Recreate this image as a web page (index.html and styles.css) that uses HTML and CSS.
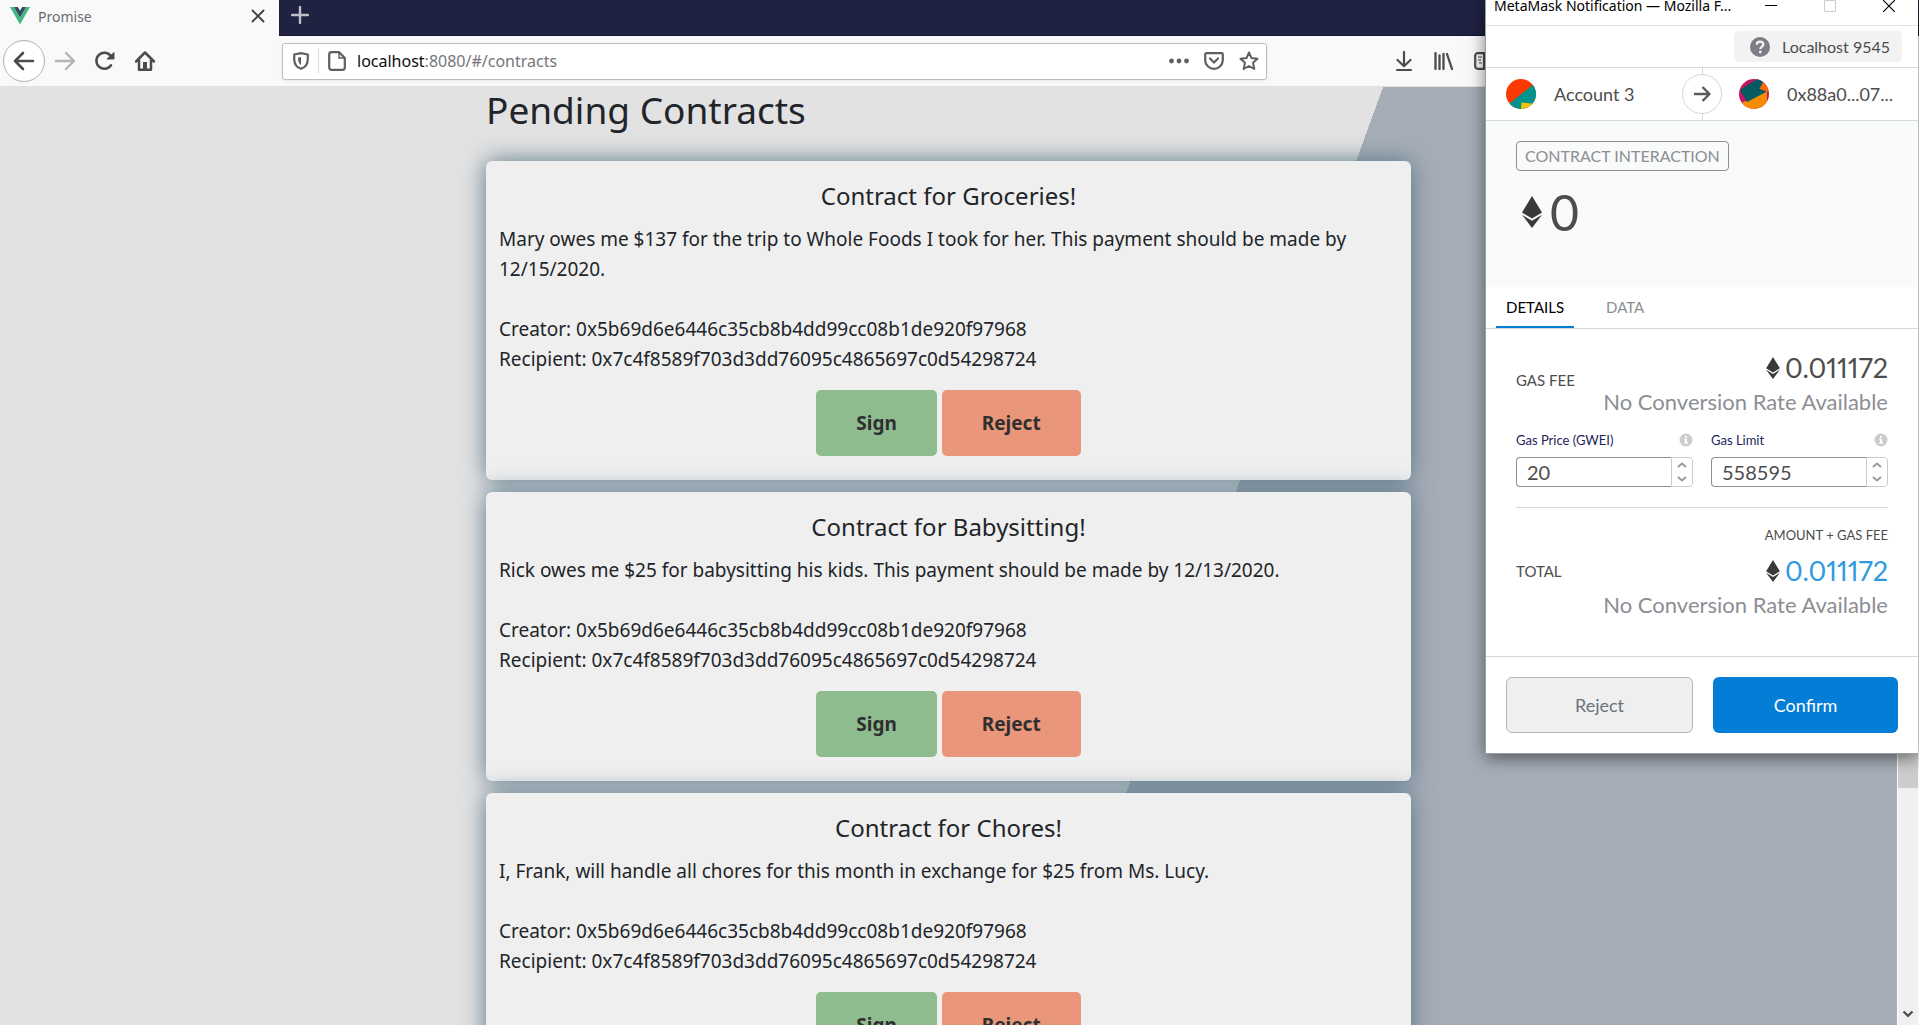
FILE: index.html
```html
<!DOCTYPE html>
<html lang="en">
<head>
<meta charset="utf-8">
<title>Promise</title>
<link rel="stylesheet" href="styles.css">
</head>
<body>
<svg class="defs" width="0" height="0" aria-hidden="true">
  <symbol id="eth" viewBox="0 0 20 32">
    <path d="M10 0 20 16.500 10 22.500 0 16.500z" fill="#393939"/>
    <path d="M0 18.700 10 24.800 20 18.700 10 32z" fill="#393939"/>
  </symbol>
  <symbol id="info" viewBox="0 0 14 14">
    <circle cx="7" cy="7" r="6.500" fill="#ccc"/>
    <path d="M6 3h2v1.800H6zM5.300 5.800H8V9.300h.8v1.400H5.200V9.300H6V7.200h-.7z" fill="#fff"/>
  </symbol>
  <symbol id="up" viewBox="0 0 10 6"><path d="M1 5 5 1.500 9 5" fill="none" stroke="#9b9b9b" stroke-width="2"/></symbol>
  <symbol id="down" viewBox="0 0 10 6"><path d="M1 1 5 4.500 9 1" fill="none" stroke="#9b9b9b" stroke-width="2"/></symbol>
</svg>

<header class="browser">
  <div class="tabstrip">
    <div class="tab">
      <svg width="20" height="18" viewBox="0 0 20 18"><path d="M0 0h4l6 10.400L16 0h4L10 17.500z" fill="#41b883"/><path d="M4 0h3.800L10 3.800 12.200 0H16l-6 10.400z" fill="#35495e"/></svg>
      <span class="tab-title">Promise</span>
      <button class="icon-btn tab-close" aria-label="Close tab"><svg width="14" height="14" viewBox="0 0 14 14"><path d="M1.500 1.500l11 11M12.500 1.500l-11 11" stroke="#3c3c3d" stroke-width="1.800" stroke-linecap="round"/></svg></button>
    </div>
    <button class="icon-btn new-tab" aria-label="New tab"><svg width="18" height="18" viewBox="0 0 18 18"><path d="M9 1v16M1 9h16" stroke="#bfc0ca" stroke-width="2.400" stroke-linecap="round"/></svg></button>
  </div>
  <div class="toolbar">
    <nav class="nav">
      <button class="icon-btn back" aria-label="Back"><svg width="22" height="20" viewBox="0 0 22 20"><path d="M20 10H2.500M10 2 2 10l8 8" fill="none" stroke="#4c4c4d" stroke-width="2.600" stroke-linecap="round" stroke-linejoin="round"/></svg></button>
      <button class="icon-btn forward" aria-label="Forward"><svg width="22" height="20" viewBox="0 0 22 20"><path d="M2 10h17.500M12 2l8 8-8 8" fill="none" stroke="#b4b4b5" stroke-width="2.400" stroke-linecap="round" stroke-linejoin="round"/></svg></button>
      <button class="icon-btn" aria-label="Reload"><svg width="20" height="20" viewBox="0 0 20 20"><path d="M16 14.300A8 8 0 1 1 16 5.200" fill="none" stroke="#4c4c4d" stroke-width="2.500" stroke-linecap="round"/><path d="M19 1.500V8h-7z" fill="#4c4c4d" stroke="#4c4c4d" stroke-linejoin="round"/></svg></button>
      <button class="icon-btn" aria-label="Home"><svg width="20" height="20" viewBox="0 0 20 20"><path d="M1 10.500 10 1.500l9 9M4 9v9.700h12V9" fill="none" stroke="#4c4c4d" stroke-width="2.500" stroke-linecap="round" stroke-linejoin="round"/><path d="M8 19v-8h4v8z" fill="#4c4c4d"/></svg></button>
    </nav>
    <div class="urlbar">
      <svg width="16" height="18" viewBox="0 0 16 18"><path d="M8 1.200 14.800 2.500V7c0 5-3 8.500-6.800 9.800C4.200 15.500 1.200 12 1.200 7V2.500z" fill="none" stroke="#5f5f60" stroke-width="2.200" stroke-linejoin="round"/><path d="M8 5v8c-2-1.200-3-3.500-3-7.500z" fill="#5f5f60"/></svg>
      <span class="url-rule"></span>
      <svg width="18" height="20" viewBox="0 0 18 20"><path d="M3.500 1.200H11l5.800 5.800v9.500a2.300 2.300 0 0 1-2.300 2.300h-11a2.300 2.300 0 0 1-2.300-2.300v-13a2.300 2.300 0 0 1 2.300-2.300z" fill="none" stroke="#5f5f60" stroke-width="2.200"/><path d="M11 1.500V7h5.500" fill="none" stroke="#5f5f60" stroke-width="1.400"/></svg>
      <span class="url"><b>localhost</b>:8080/#/contracts</span>
      <svg width="20" height="6" viewBox="0 0 20 6"><circle cx="2.500" cy="3" r="2.400" fill="#5f5f60"/><circle cx="10" cy="3" r="2.400" fill="#5f5f60"/><circle cx="17.500" cy="3" r="2.400" fill="#5f5f60"/></svg>
      <svg width="20" height="18" viewBox="0 0 20 18"><path d="M2.500 1.200h15a1.300 1.300 0 0 1 1.300 1.300V8a8.800 8.800 0 0 1-17.600 0V2.500a1.300 1.300 0 0 1 1.300-1.300z" fill="none" stroke="#5f5f60" stroke-width="2.200"/><path d="M6 6.500l4 4 4-4" fill="none" stroke="#5f5f60" stroke-width="2.200" stroke-linecap="round" stroke-linejoin="round"/></svg>
      <svg width="20" height="20" viewBox="0 0 20 20"><path d="M10 1.500l2.500 5.600 6 .6-4.500 4.100 1.300 6.200L10 15l-5.300 3L6 11.800 1.500 7.700l6-.6z" fill="none" stroke="#5f5f60" stroke-width="2" stroke-linejoin="round"/></svg>
    </div>
    <div class="tools">
      <button class="icon-btn" aria-label="Downloads"><svg width="16" height="20" viewBox="0 0 16 20"><path d="M8 1v14M1.500 9 8 15.200 14.500 9" fill="none" stroke="#4c4c4d" stroke-width="2.200" stroke-linecap="round" stroke-linejoin="round"/><path d="M1 19h14" stroke="#4c4c4d" stroke-width="2" stroke-linecap="round"/></svg></button>
      <button class="icon-btn" aria-label="Library"><svg width="20" height="18" viewBox="0 0 20 18"><path d="M1.500 1v16M5.500 3.500V17M9.500 2v15M13 2l5 15" stroke="#4c4c4d" stroke-width="2.300" stroke-linecap="round"/></svg></button>
      <button class="icon-btn" aria-label="Sidebars"><svg width="20" height="18" viewBox="0 0 20 18"><rect x="1.200" y="1.200" width="17.600" height="15.600" rx="2.500" fill="none" stroke="#4c4c4d" stroke-width="2.200"/><path d="M10 1v16" stroke="#4c4c4d" stroke-width="2"/><path d="M4 5h4M4 8h3M5 11h3" stroke="#4c4c4d" stroke-width="1.200"/></svg></button>
    </div>
  </div>
</header>

<div class="viewport">
  <main class="page">
    <div class="contracts">
      <h1>Pending Contracts</h1>
      <article class="card">
        <h2>Contract for Groceries!</h2>
        <p>Mary owes me $137 for the trip to Whole Foods I took for her. This payment should be made by 12/15/2020.</p>
        <p class="parties">Creator: 0x5b69d6e6446c35cb8b4dd99cc08b1de920f97968<br>Recipient: 0x7c4f8589f703d3dd76095c4865697c0d54298724</p>
        <div class="actions"><button class="sign">Sign</button><button class="reject">Reject</button></div>
      </article>
      <article class="card">
        <h2>Contract for Babysitting!</h2>
        <p>Rick owes me $25 for babysitting his kids. This payment should be made by 12/13/2020.</p>
        <p class="parties">Creator: 0x5b69d6e6446c35cb8b4dd99cc08b1de920f97968<br>Recipient: 0x7c4f8589f703d3dd76095c4865697c0d54298724</p>
        <div class="actions"><button class="sign">Sign</button><button class="reject">Reject</button></div>
      </article>
      <article class="card">
        <h2>Contract for Chores!</h2>
        <p>I, Frank, will handle all chores for this month in exchange for $25 from Ms. Lucy.</p>
        <p class="parties">Creator: 0x5b69d6e6446c35cb8b4dd99cc08b1de920f97968<br>Recipient: 0x7c4f8589f703d3dd76095c4865697c0d54298724</p>
        <div class="actions"><button class="sign">Sign</button><button class="reject">Reject</button></div>
      </article>
    </div>
  </main>
  <div class="scrollbar">
    <div class="thumb"></div>
    <svg width="12" height="8" viewBox="0 0 12 8"><path d="M1.500 1.500 6 5.800l4.500-4.300" fill="none" stroke="#505050" stroke-width="2.400"/></svg>
  </div>
</div>

<section class="popup" aria-label="MetaMask Notification">
  <header class="popup-title">
    <span class="popup-name">MetaMask Notification — Mozilla F...</span>
    <button class="icon-btn" aria-label="Minimize"><svg width="12" height="12" viewBox="0 0 12 12"><path d="M0 5.500h12" stroke="#000"/></svg></button>
    <button class="icon-btn" aria-label="Maximize"><svg width="12" height="12" viewBox="0 0 12 12"><path d="M.5.500h11v11H.5z" fill="none" stroke="#ccc"/></svg></button>
    <button class="icon-btn" aria-label="Close"><svg width="12" height="12" viewBox="0 0 12 12"><path d="M0 0l12 12M12 0 0 12" stroke="#000" stroke-width="1.200"/></svg></button>
  </header>
  <div class="network-row">
    <div class="network">
      <svg width="20" height="20" viewBox="0 0 20 20"><circle cx="10" cy="10" r="10" fill="#7b7f84"/><path d="M6.800 7.800C6.800 5.800 8.100 4.700 10 4.700s3.300 1.100 3.300 2.800c0 2.200-2.900 2.200-2.900 4.600" fill="none" stroke="#f2f3f4" stroke-width="2.300"/><circle cx="10.300" cy="15" r="1.400" fill="#f2f3f4"/></svg>
      <span>Localhost 9545</span>
    </div>
  </div>
  <div class="parties-row">
    <div class="party">
      <svg width="30" height="30" viewBox="0 0 30 30"><clipPath id="ca"><circle cx="15" cy="15" r="15"/></clipPath><g clip-path="url(#ca)"><path d="M0 0h30v30H0z" fill="#fb3a02"/><path d="M28 5 4 24l-1 6h27V5z" fill="#03938e"/><path d="M15.500 23.500 30 25v5H15z" fill="#f5c300"/></g></svg>
      <span>Account 3</span>
    </div>
    <div class="arrow">
      <svg width="18" height="18" viewBox="0 0 18 18"><path d="M1 9h15M9.500 2 16.500 9l-7 7" fill="none" stroke="#5b5b5b" stroke-width="2.400" stroke-linejoin="round"/></svg>
    </div>
    <div class="party recipient">
      <svg width="30" height="30" viewBox="0 0 30 30"><clipPath id="cb"><circle cx="15" cy="15" r="15"/></clipPath><g clip-path="url(#cb)"><path d="M0 0h30v30H0z" fill="#c91561"/><path d="M0 25 28 12v18H0z" fill="#f58c03"/><path d="M1 11 13 3 22-2l4 7-3 4 4 4L8 23z" fill="#045b62"/><path d="M24 3 20.500 10 30 13V6z" fill="#fb6a02"/></g></svg>
      <span>0x88a0...07...</span>
    </div>
  </div>
  <div class="summary">
    <span class="action-tag">CONTRACT INTERACTION</span>
    <div class="amount"><svg width="20" height="32"><use href="#eth"/></svg><span>0</span></div>
  </div>
  <nav class="popup-tabs">
    <button class="popup-tab active">DETAILS</button>
    <button class="popup-tab">DATA</button>
  </nav>
  <div class="details">
    <div class="fee">
      <span class="fee-label">GAS FEE</span>
      <div class="fee-values">
        <div class="eth-value"><svg width="14" height="22"><use href="#eth"/></svg><span>0.011172</span></div>
        <div class="rate">No Conversion Rate Available</div>
      </div>
    </div>
    <div class="gas-fields">
      <div class="field">
        <label for="price">Gas Price (GWEI)</label><svg width="14" height="14"><use href="#info"/></svg>
        <div class="number"><input id="price" type="number" value="20"><div class="steps"><button aria-label="Raise gas price"><svg width="10" height="6"><use href="#up"/></svg></button><button aria-label="Lower gas price"><svg width="10" height="6"><use href="#down"/></svg></button></div></div>
      </div>
      <div class="field">
        <label for="limit">Gas Limit</label><svg width="14" height="14"><use href="#info"/></svg>
        <div class="number"><input id="limit" type="number" value="558595"><div class="steps"><button aria-label="Raise gas limit"><svg width="10" height="6"><use href="#up"/></svg></button><button aria-label="Lower gas limit"><svg width="10" height="6"><use href="#down"/></svg></button></div></div>
      </div>
    </div>
    <div class="total-note">AMOUNT + GAS FEE</div>
    <div class="fee total">
      <span class="fee-label">TOTAL</span>
      <div class="fee-values">
        <div class="eth-value"><svg width="14" height="22"><use href="#eth"/></svg><span>0.011172</span></div>
        <div class="rate">No Conversion Rate Available</div>
      </div>
    </div>
  </div>
  <footer class="popup-actions">
    <button class="popup-btn secondary">Reject</button>
    <button class="popup-btn primary">Confirm</button>
  </footer>
</section>
</body>
</html>
```
FILE: styles.css
```css
* { box-sizing: border-box; }

body {
  margin: 0;
  height: 100vh;
  display: flex;
  flex-direction: column;
  overflow: hidden;
  position: relative;
  background: #f9f9fa;
  color: #212529;
  font-family: "Noto Sans", "Open Sans", sans-serif;
}

.defs { position: absolute; }
svg { display: block; flex: none; }
button { font-family: inherit; cursor: pointer; }

.icon-btn {
  display: flex;
  align-items: center;
  justify-content: center;
  padding: 0;
  border: 0;
  background: none;
}

/* Browser chrome */
.tabstrip {
  display: flex;
  height: 36px;
  background: #1f2241;
  border-bottom: 1px solid #11132b;
}
.tab {
  display: flex;
  align-items: center;
  gap: 8px;
  width: 279px;
  height: 36px;
  padding: 0 14px 4px 10px;
  background: #f9f9fa;
}
.tab-title { flex: 1; font-size: 14px; color: #6b6b70; }
.new-tab { width: 42px; height: 30px; }

.toolbar {
  display: grid;
  grid-template-columns: 282px 985fr 652fr;
  align-items: center;
  height: 51px;
  border-bottom: 1px solid #e0e0e1;
}
.nav { display: flex; align-items: center; padding-left: 3px; }
.nav .icon-btn { width: 40px; height: 42px; }
.nav .back { width: 42px; border: 1px solid #b1b1b3; border-radius: 50%; background: #fff; }
.urlbar {
  display: flex;
  align-items: center;
  gap: 15px;
  height: 37px;
  padding: 0 7px 0 10px;
  border: 1px solid #bdbdbe;
  border-radius: 3px;
  background: #fff;
  box-shadow: 0 1px 4px rgba(0, 0, 0, .06);
}
.url-rule { width: 1px; height: 26px; background: #ddd; margin: 0 -6px; }
.url { flex: 1; font-size: 16px; color: #75757a; margin-left: -4px; }
.url b { font-weight: 400; color: #0c0c0d; }
.tools { display: flex; gap: 4px; padding-left: 119px; }
.tools .icon-btn { width: 36px; height: 36px; }

/* Web page */
.viewport { flex: 1; min-height: 0; display: flex; padding-right: 1px; }
.page {
  flex: 1;
  overflow: hidden;
  background: linear-gradient(110deg, #e2e2e2 calc(50% + 248px), #a6adb7 calc(50% + 248px));
}
.contracts { width: 925px; max-width: 100%; margin: 0 auto; }
h1 {
  margin: 0 0 28px;
  font-size: 37px;
  line-height: 46px;
  font-weight: 400;
}
.card {
  margin-bottom: 12px;
  padding: 16px 13px 24px;
  border-radius: 6px;
  background: #efefef;
  box-shadow: 0 0 25px #587587;
  font-size: 19px;
  line-height: 30px;
}
.card h2 {
  margin: 0 0 9px;
  font-size: 24px;
  line-height: 38px;
  font-weight: 400;
  text-align: center;
}
.card p { margin: 0; }
.card .parties { margin: 30px 0 16px; }
.actions { display: flex; justify-content: center; gap: 5px; }
.actions button {
  height: 66px;
  padding: 0 40px;
  border: 0;
  border-radius: 5px;
  font-size: 19px;
  font-weight: 700;
  color: #2f2f2f;
}
.actions .sign { background: #8fbc8f; }
.actions .reject { background: #e9967a; }

.scrollbar {
  display: flex;
  flex-direction: column;
  justify-content: space-between;
  align-items: center;
  width: 21px;
  padding-bottom: 7px;
  border-left: 1px solid #fff;
  background: #f0f0f0;
}
.thumb { width: 100%; height: 701px; background: #cdcdcd; }

/* Wallet window floating over the browser */
.popup {
  position: absolute;
  top: 0;
  right: 1px;
  width: 433px;
  border: 1px solid #999fa8;
  border-width: 0 0 1px 1px;
  background: #fff;
  box-shadow: 0 4px 16px rgba(0, 0, 0, .5);
  color: #4d4d4d;
  font-family: Lato, sans-serif;
}
.popup-title {
  display: flex;
  align-items: center;
  height: 26px;
  padding: 0 0 14px 8px;
  border-bottom: 1px solid #e1e1e1;
  color: #000;
  font-family: "Noto Sans", sans-serif;
}
.popup-name { flex: 1; font-size: 14px; line-height: 12px; white-space: nowrap; }
.popup-title .icon-btn { width: 59px; height: 12px; }

.network-row { display: flex; justify-content: flex-end; padding: 5px 16px; border-bottom: 1px solid #d2d8dd; }
.network {
  display: flex;
  align-items: center;
  gap: 12px;
  height: 31px;
  padding: 0 12px 0 16px;
  border-radius: 5px;
  background: #f2f2f2;
  font-size: 16px;
}

.parties-row {
  display: grid;
  grid-template-columns: 1fr 40px 1fr;
  height: 53px;
  align-items: center;
  border-bottom: 1px solid #d2d8dd;
  background: linear-gradient(#d2d8dd, #d2d8dd) 50% 0 / 1px 100% no-repeat;
  font-size: 18px;
}
.party { display: flex; align-items: center; gap: 18px; padding-left: 20px; white-space: nowrap; }
.party.recipient { padding-left: 17px; }
.arrow {
  display: flex;
  align-items: center;
  justify-content: center;
  height: 40px;
  border: 1px solid #d2d8dd;
  border-radius: 50%;
  background: #fff;
}

.summary { height: 166px; padding: 20px 30px; background: #f9fafa; }
.action-tag {
  display: inline-block;
  padding: 0 8px;
  border: 1px solid #8c8e94;
  border-radius: 4px;
  font-size: 16px;
  line-height: 28px;
  color: #8c8e94;
}
.amount { display: flex; align-items: center; gap: 8px; margin-top: 15px; padding-left: 6px; font-size: 50px; line-height: 52px; }

.popup-tabs { display: flex; gap: 10px; height: 42px; padding: 0 10px; border-bottom: 1px solid #d2d8dd; }
.popup-tab {
  padding: 0 10px;
  border: 0;
  border-bottom: 2px solid transparent;
  background: none;
  font-size: 15px;
  color: #8c8e94;
}
.popup-tab + .popup-tab { padding: 0 22px; }
.popup-tab.active { border-bottom-color: #037dd6; color: #000; }

.details { height: 327px; padding: 20px 30px 0; }
.fee { display: flex; justify-content: space-between; align-items: center; }
.fee-label { margin-bottom: 6px; font-size: 15px; }
.fee-values { text-align: right; }
.eth-value { display: flex; align-items: center; justify-content: flex-end; gap: 5px; font-size: 27px; line-height: 38px; font-feature-settings: "pnum"; }
.rate { font-size: 22px; line-height: 30px; color: #8c8e94; }

.gas-fields {
  display: grid;
  grid-template-columns: repeat(2, minmax(0, 1fr));
  gap: 18px;
  padding: 13px 0 20px;
  border-bottom: 1px solid #d8d8d8;
}
.field { display: flex; flex-wrap: wrap; align-items: center; justify-content: space-between; row-gap: 7px; }
.field label { font-size: 13px; line-height: 20px; color: #1b2559; }
.number { display: flex; width: 100%; height: 30px; }
.number input {
  flex: 1;
  min-width: 0;
  padding: 0 10px;
  border: 1px solid #8f8f8f;
  border-right: 0;
  border-radius: 4px 0 0 4px;
  font: 20px Lato, sans-serif;
  color: #4d4d4d;
  appearance: textfield;
}
.steps { display: flex; flex-direction: column; width: 22px; border: 1px solid #ccc; border-radius: 0 4px 4px 0; }
.steps button { flex: 1; display: flex; align-items: center; justify-content: center; padding: 0; border: 0; background: none; }

.total-note { margin-top: 17px; font-size: 13px; line-height: 20px; text-align: right; }
.total { margin-top: 7px; align-items: flex-start; }
.total .fee-label { line-height: 38px; }
.total .eth-value span { color: #2f9ae0; }

.popup-actions { display: flex; gap: 20px; padding: 20px; border-top: 1px solid #d2d8dd; }
.popup-btn { flex: 1; height: 56px; border-radius: 6px; font-size: 18px; }
.secondary { border: 1px solid #b5b5b5; background: #efefef; color: #6a737d; }
.primary { border: 0; background: #037dd6; color: #fff; }
```
